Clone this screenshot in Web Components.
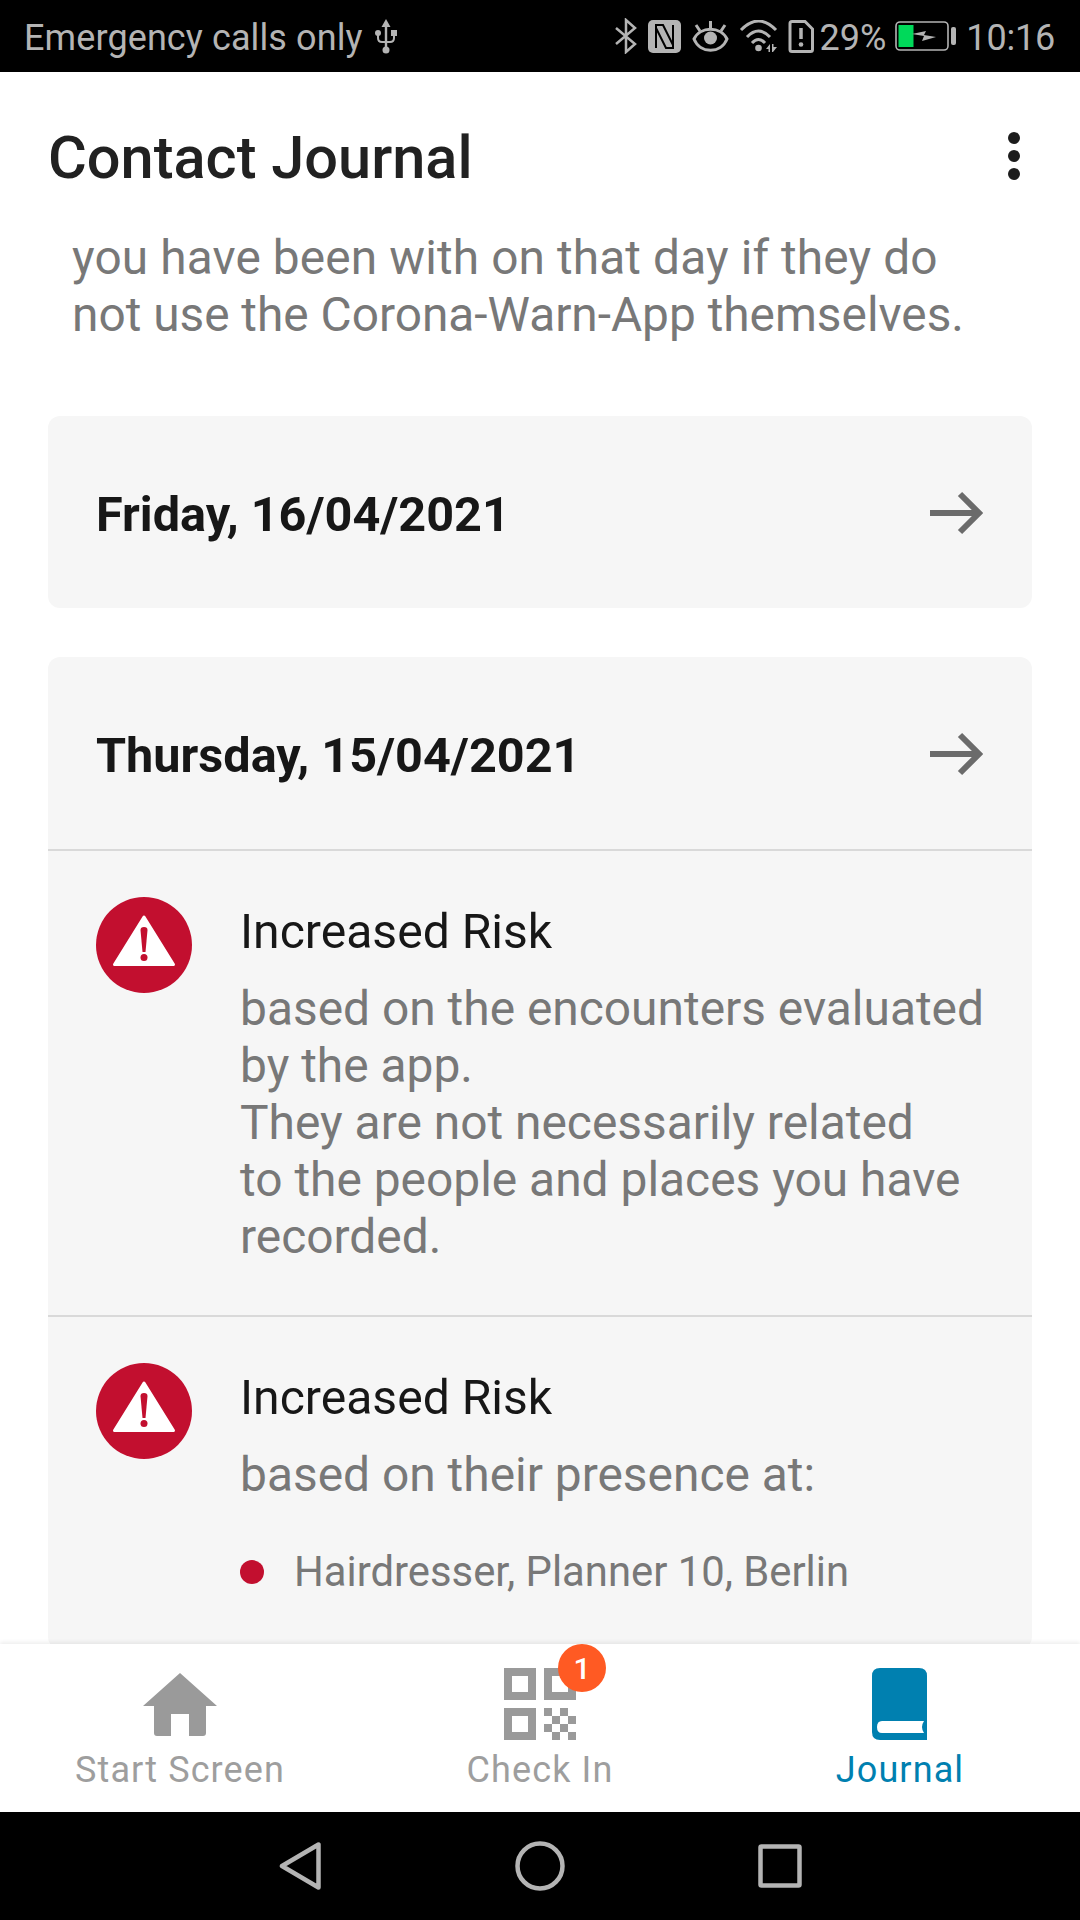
<!DOCTYPE html>
<html lang="en">
<head>
<meta charset="utf-8">
<title>Contact Journal</title>
<style>
  html, body { margin: 0; padding: 0; background: #fff; }
  body { font-family: Roboto, "Liberation Sans", sans-serif; }
  .screen { display: flex; flex-direction: column; width: 1080px; height: 1920px; overflow: hidden; }
</style>
</head>
<body>
<div class="screen">
  <status-bar></status-bar>
  <app-toolbar title="Contact Journal"></app-toolbar>
  <journal-list>
    <intro-text><span style="letter-spacing:.12px">you have been with on that day if they do</span><br>not use the Corona-Warn-App themselves.</intro-text>
    <day-card date="Friday, 16/04/2021"></day-card>
    <day-card date="Thursday, 15/04/2021">
      <risk-item title="Increased Risk">based on the encounters evaluated<br>by the app.<br>They are not necessarily related<br>to the people and places you have<br>recorded.</risk-item>
      <risk-item title="Increased Risk">based on their presence at:
        <ul-dot slot="list">Hairdresser, Planner 10, Berlin</ul-dot>
      </risk-item>
    </day-card>
  </journal-list>
  <bottom-nav>
    <nav-tab label="Start Screen" icon="home"></nav-tab>
    <nav-tab label="Check In" icon="qr" badge="1"></nav-tab>
    <nav-tab label="Journal" icon="book" active></nav-tab>
  </bottom-nav>
  <system-nav></system-nav>
</div>
<script>
class StatusBar extends HTMLElement {
  constructor() {
    super();
    this.attachShadow({ mode: 'open' });
    this.shadowRoot.innerHTML = `
      <style>
        :host { display:flex; align-items:center; flex:none; height:72px; background:#000; color:#b4b4b4;
                font-family:Roboto,sans-serif; font-size:36px; padding:0 25px 0 24px; box-sizing:border-box; }
        svg { display:block; flex:none; }
        span { padding-top:4px; }
        .left { display:flex; align-items:center; gap:10px; flex:1; }
        .right { display:flex; align-items:center; }
      </style>
      <div class="left"><span style="letter-spacing:.1px">Emergency calls only</span>
        <svg width="26" height="36" viewBox="0 0 26 36" fill="#b4b4b4">
          <path d="M13 1l4.500 8h-3.300v23h-2.400V9H8.500z"/><circle cx="13" cy="32" r="3.500"/>
          <circle cx="5" cy="15" r="3"/><rect x="18" y="12" width="6" height="6"/>
          <path d="M5 15V20Q5 24 9 24H17Q21 24 21 20V15" fill="none" stroke="#b4b4b4" stroke-width="2"/>
        </svg>
      </div>
      <div class="right">
        <svg width="22" height="36" viewBox="0 0 22 36" fill="none" stroke="#b4b4b4" stroke-width="2.500" style="margin-right:11px">
          <path d="M1 10l19 16-9 8V2l9 8L1 26"/>
        </svg>
        <svg width="33" height="33" viewBox="0 0 33 33" style="margin-right:11px">
          <rect width="33" height="33" rx="5" fill="#b4b4b4"/>
          <path d="M8 28V5H15L25 25M25 5V28H18L8 8" fill="none" stroke="#000" stroke-width="2"/>
        </svg>
        <svg width="37" height="33" viewBox="0 0 37 33" fill="none" stroke="#b4b4b4" stroke-width="3" style="margin-right:10px">
          <path d="M2 19C8 6 29 6 35 19C29 34 8 34 2 19Z"/>
          <circle cx="18.500" cy="18" r="6.500" fill="#b4b4b4" stroke="none"/>
          <path d="M18.500 8V1M8 11L4 5M29 11L33 5"/>
        </svg>
        <svg width="39" height="33" viewBox="0 0 39 33" fill="none" stroke="#b4b4b4" stroke-width="3" style="margin-right:10px">
          <path d="M2 10Q19.500 -8 37 10M8 17Q19.500 5 31 17M13 23Q19.500 16 26 23"/>
          <circle cx="19.500" cy="28" r="3.300" fill="#b4b4b4" stroke="none"/>
          <path d="M27 29l4-5v8h-1.500v-3zM33 24h1.500v3H38l-4 5h-1z" fill="#b4b4b4" stroke="none"/>
        </svg>
        <svg width="26" height="33" viewBox="0 0 26 33" fill="none" stroke="#b4b4b4" stroke-width="3" style="margin-right:6px">
          <path d="M2 3.500Q2 1.500 4 1.500H17L24.500 9V29.500Q24.500 31.500 22.500 31.500H4Q2 31.500 2 29.500Z"/>
          <path d="M13 8V19" stroke-width="3.500"/><circle cx="13" cy="24.500" r="2.300" fill="#b4b4b4" stroke="none"/>
        </svg>
        <span style="margin-right:9px">29%</span>
        <svg width="61" height="30" viewBox="0 0 61 30" style="margin-right:10px">
          <rect x="1" y="1" width="52" height="28" rx="4" fill="none" stroke="#b4b4b4" stroke-width="1.600"/>
          <rect x="3.500" y="4" width="15" height="22" fill="#00d95a"/>
          <path d="M17 13L31 10L29 14L41 16L27 20L29 15Z" fill="#b4b4b4"/>
          <rect x="56" y="6" width="5" height="18" rx="2" fill="#b4b4b4"/>
        </svg>
        <span style="letter-spacing:-.2px">10:16</span>
      </div>`;
  }
}
customElements.define('status-bar', StatusBar);

class AppToolbar extends HTMLElement {
  constructor() {
    super();
    this.attachShadow({ mode: 'open' });
    this.shadowRoot.innerHTML = `
      <style>
        :host { display:flex; align-items:center; justify-content:space-between; flex:none; height:150px;
                padding:18px 60px 0 48px; box-sizing:border-box; background:#fff; position:relative; z-index:1; }
        h1 { margin:0; padding-top:4px; font:500 59.500px Roboto,sans-serif; color:#212121; }
        .dots { display:grid; gap:6px; }
        .dots i { display:block; width:12px; height:12px; border-radius:50%; background:#1c1c1c; }
      </style>
      <h1></h1><div class="dots"><i></i><i></i><i></i></div>`;
    this.shadowRoot.querySelector('h1').textContent = this.getAttribute('title');
  }
}
customElements.define('app-toolbar', AppToolbar);

class JournalList extends HTMLElement {
  constructor() {
    super();
    this.attachShadow({ mode: 'open' });
    this.shadowRoot.innerHTML = `
      <style>
        :host { display:block; flex:1; min-height:0; overflow:hidden; padding:8px 48px 0; box-sizing:border-box; background:#fff; }
        .stack { display:flex; flex-direction:column; gap:49px; }
      </style>
      <div class="stack"><slot></slot></div>`;
  }
}
customElements.define('journal-list', JournalList);

class IntroText extends HTMLElement {
  constructor() {
    super();
    this.attachShadow({ mode: 'open' });
    this.shadowRoot.innerHTML = `
      <style>
        :host { display:block; padding:0 0 23px 24px; font:400 47.800px/57px Roboto,sans-serif; color:#787878; }
      </style><slot></slot>`;
  }
}
customElements.define('intro-text', IntroText);

class DayCard extends HTMLElement {
  constructor() {
    super();
    this.attachShadow({ mode: 'open' });
    this.shadowRoot.innerHTML = `
      <style>
        :host { display:block; flex:none; background:#f6f6f6; border-radius:12px; font-family:Roboto,sans-serif; }
        .head { display:flex; align-items:center; justify-content:space-between; height:192px; padding:0 48px; box-sizing:border-box; }
        .date { font-weight:700; font-size:48.600px; color:#171717; padding-top:4px; }
        svg { display:block; margin-top:2px; }
      </style>
      <div class="head"><span class="date"></span>
        <svg width="54" height="44" viewBox="0 0 54 44" fill="none" stroke="#6b6b6b" stroke-width="6">
          <path d="M0 22H48M30 3L49 22L30 41"/>
        </svg>
      </div><slot></slot>`;
    this.shadowRoot.querySelector('.date').textContent = this.getAttribute('date');
  }
}
customElements.define('day-card', DayCard);

class RiskItem extends HTMLElement {
  constructor() {
    super();
    this.attachShadow({ mode: 'open' });
    this.shadowRoot.innerHTML = `
      <style>
        :host { display:grid; grid-template-columns:96px 1fr; column-gap:48px; padding:46px 48px 49px;
                border-top:2px solid #d9d9d9; font-family:Roboto,sans-serif; }
        .title { font-size:48.100px; line-height:57px; color:#171717; margin:6px 0 21px; }
        .body { font-size:47.900px; line-height:57px; color:#787878; white-space:nowrap; }
        svg { display:block; }
      </style>
      <svg width="96" height="96" viewBox="0 0 96 96">
        <circle cx="48" cy="48" r="48" fill="#c20f2f"/>
        <path d="M48 20L77.500 67.500H18.500Z" fill="#fff" stroke="#fff" stroke-width="3" stroke-linejoin="round"/>
        <path d="M44.500 33Q44.500 30 48 30Q51.500 30 51.500 33L49.500 55H46.500Z" fill="#c20f2f"/><circle cx="48" cy="60.500" r="3.500" fill="#c20f2f"/>
      </svg>
      <div><div class="title"></div><div class="body"><slot></slot></div><slot name="list"></slot></div>`;
    this.shadowRoot.querySelector('.title').textContent = this.getAttribute('title');
  }
}
customElements.define('risk-item', RiskItem);

class UlDot extends HTMLElement {
  constructor() {
    super();
    this.attachShadow({ mode: 'open' });
    this.shadowRoot.innerHTML = `
      <style>
        :host { display:flex; align-items:center; gap:30px; margin-top:39px; font:400 41.800px/57px Roboto,sans-serif; color:#787878; white-space:nowrap; }
        i { width:24px; height:24px; border-radius:50%; background:#c20f2f; flex:none; }
      </style><i></i><span><slot></slot></span>`;
  }
}
customElements.define('ul-dot', UlDot);

class BottomNav extends HTMLElement {
  constructor() {
    super();
    this.attachShadow({ mode: 'open' });
    this.shadowRoot.innerHTML = `
      <style>
        :host { display:grid; grid-template-columns:repeat(3,1fr); flex:none; height:168px; background:#fff;
                box-shadow:0 -2px 4px rgba(0,0,0,.07); position:relative; z-index:1; }
      </style><slot></slot>`;
  }
}
customElements.define('bottom-nav', BottomNav);

const TAB_ICONS = {
  home: `<svg width="74" height="64" viewBox="0 0 74 64" style="margin-top:5px;margin-bottom:-1px">
      <path d="M37 0L74 33H63V60Q63 63 60 63H46V41H28V63H14Q11 63 11 60V33H0Z" fill="#9a9a9a"/></svg>`,
  qr: `<svg width="72" height="72" viewBox="0 0 72 72" fill="#9a9a9a">
      <path fill-rule="evenodd" d="M0 0h32v32H0zM8 8v16h16V8zM40 0h32v32H40zM48 8v16h16V8zM0 40h32v32H0zM8 48v16h16V48z"/>
      <path d="M40 40h8v8h-8zM56 40h8v8h-8zM48 48h8v8h-8zM64 48h8v8h-8zM40 56h8v8h-8zM56 56h8v8h-8zM48 64h8v8h-8zM64 64h8v8h-8z"/></svg>`,
  book: `<svg width="55" height="72" viewBox="0 0 55 72" style="margin-right:1px">
      <path d="M8 0H47Q55 0 55 8V72H8Q0 72 0 64V8Q0 0 8 0Z" fill="#0080b0"/>
      <path d="M10 53H52Q48 59 52 65H10Q5 65 5 59Q5 53 10 53Z" fill="#fff"/></svg>`
};

class NavTab extends HTMLElement {
  constructor() {
    super();
    this.attachShadow({ mode: 'open' });
    const active = this.hasAttribute('active');
    const badge = this.getAttribute('badge');
    this.shadowRoot.innerHTML = `
      <style>
        :host { display:flex; flex-direction:column; align-items:center; padding-top:24px; box-sizing:border-box;
                font-family:Roboto,sans-serif; }
        .icon { position:relative; height:72px; display:flex; align-items:flex-start; }
        .label { font-size:36px; line-height:42px; letter-spacing:1.100px; margin-top:9px; color:${active ? '#0080b0' : '#9e9e9e'}; }
        .badge { position:absolute; left:54px; top:-24px; width:48px; height:48px; border-radius:50%; background:#ff5a23;
                 color:#fff; font-size:30px; font-weight:500; display:grid; place-items:center; }
      </style>
      <div class="icon">${TAB_ICONS[this.getAttribute('icon')]}${badge ? `<span class="badge">${badge}</span>` : ''}</div>
      <div class="label"></div>`;
    this.shadowRoot.querySelector('.label').textContent = this.getAttribute('label');
  }
}
customElements.define('nav-tab', NavTab);

class SystemNav extends HTMLElement {
  constructor() {
    super();
    this.attachShadow({ mode: 'open' });
    this.shadowRoot.innerHTML = `
      <style>
        :host { display:grid; grid-template-columns:240px 240px 240px; justify-content:center; align-items:center; flex:none; height:108px; background:#000; }
        svg { display:block; justify-self:center; }
      </style>
      <svg width="42" height="50" viewBox="0 0 42 50" fill="none" stroke="#b4b4b4" stroke-width="4.500" stroke-linejoin="round"><path d="M3 25L39.500 3.500V46.500Z"/></svg>
      <svg width="50" height="50" viewBox="0 0 50 50" fill="none" stroke="#b4b4b4" stroke-width="4.500"><circle cx="25" cy="25" r="22.500"/></svg>
      <svg width="44" height="44" viewBox="0 0 44 44" fill="none" stroke="#b4b4b4" stroke-width="4.500" stroke-linejoin="round"><rect x="2.500" y="2.500" width="39" height="39" rx="1"/></svg>`;
  }
}
customElements.define('system-nav', SystemNav);
</script>
</body>
</html>
